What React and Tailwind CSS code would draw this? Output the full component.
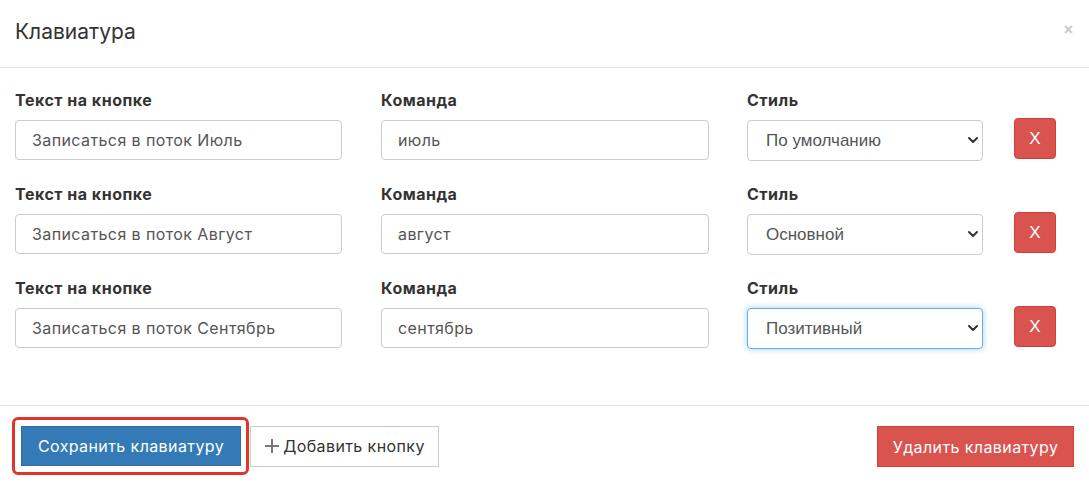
import React from "react";

const rows = [
  { text: "Записаться в поток Июль", command: "июль", style: "По умолчанию" },
  { text: "Записаться в поток Август", command: "август", style: "Основной" },
  { text: "Записаться в поток Сентябрь", command: "сентябрь", style: "Позитивный", focused: true },
];

const styles = ["По умолчанию", "Основной", "Позитивный", "Отрицательный"];

function Chevron() {
  return (
    <svg className="w-[12px] h-[12px] text-[#333]" viewBox="0 0 12 12" fill="none">
      <path d="M2 4l4 4 4-4" stroke="currentColor" strokeWidth="2" strokeLinecap="round" strokeLinejoin="round" />
    </svg>
  );
}

function ButtonRow({ row }) {
  return (
    <div className="flex items-start">
      <div className="w-[327px]">
        <div className="h-[22px] mb-[9px] text-[16px] leading-[22px] font-bold text-[#333] tracking-[0.5px]">Текст на кнопке</div>
        <input
          defaultValue={row.text}
          className="w-full h-[40px] px-[16px] rounded-[4px] border border-[#ccc] text-[16px] text-[#555] tracking-[0.4px] outline-none"
          style={{ fontFamily: "Inter, sans-serif" }}
        />
      </div>
      <div className="w-[328px] ml-[39px]">
        <div className="h-[22px] mb-[9px] text-[16px] leading-[22px] font-bold text-[#333] tracking-[0.5px]">Команда</div>
        <input
          defaultValue={row.command}
          className="w-full h-[40px] px-[16px] rounded-[4px] border border-[#ccc] text-[16px] text-[#555] tracking-[0.4px] outline-none"
          style={{ fontFamily: "Inter, sans-serif" }}
        />
      </div>
      <div className="w-[236px] ml-[38px]">
        <div className="h-[22px] mb-[9px] text-[16px] leading-[22px] font-bold text-[#333] tracking-[0.5px]">Стиль</div>
        <div className="relative">
          <select
            defaultValue={row.style}
            className={
              row.focused
                ? "w-full h-[41px] pl-[18px] pr-8 rounded-[4px] border border-[#66afe9] shadow-[0_0_6px_rgba(102,175,233,0.6)] appearance-none bg-white text-[17px] text-[#555] outline-none"
                : "w-full h-[41px] pl-[18px] pr-8 rounded-[4px] border border-[#ccc] appearance-none bg-white text-[17px] text-[#555] outline-none"
            }
            style={{ fontFamily: "'Liberation Sans', Arial, sans-serif" }}
          >
            {styles.map((s) => (
              <option key={s}>{s}</option>
            ))}
          </select>
          <div className="absolute right-[4px] top-[14px] pointer-events-none">
            <Chevron />
          </div>
        </div>
      </div>
      <button
        className="ml-[31px] mt-[29px] w-[42px] h-[41px] rounded-[4px] bg-[#d9534f] border border-[#d43f3a] text-white text-[17px]"
        style={{ fontFamily: "'Liberation Sans', Arial, sans-serif" }}
      >
        X
      </button>
    </div>
  );
}

export default function App() {
  return (
    <div className="w-[1089px] h-[482px] bg-white text-[#333]" style={{ fontFamily: "Inter, sans-serif" }}>
      {/* Header */}
      <div className="h-[68px] flex items-center justify-between pl-[15px] pr-[16px] pb-[4px] border-b border-[#e5e5e5]">
        <h4 className="text-[21px] text-[#333] font-normal">Клавиатура</h4>
        <span className="text-[#c8c8c8] text-[16px] font-bold -mt-[4px]" style={{ fontFamily: "'Liberation Sans', Arial, sans-serif" }}>
          ×
        </span>
      </div>

      {/* Body */}
      <div className="pl-[15px] pt-[21px] pb-[56px] flex flex-col gap-[22px]">
        {rows.map((row, i) => (
          <ButtonRow key={i} row={row} />
        ))}
      </div>

      {/* Footer */}
      <div className="border-t border-[#e5e5e5] pl-[12px] pr-[15px] pt-[11px] flex items-start justify-between">
        <div className="flex items-center">
          <div className="border-[3px] border-[#e0352b] rounded-[6px] p-[6px] pr-[5px]">
            <button className="w-[220px] h-[40px] bg-[#337ab7] border border-[#2e6da4] text-white text-[16px] tracking-[0.4px]">
              Сохранить клавиатуру
            </button>
          </div>
          <button className="ml-[1px] h-[41px] w-[189px] border border-[#ccc] bg-white text-[16px] text-[#333] tracking-[0.4px] flex items-center justify-center gap-[3px]">
            <svg className="w-[16px] h-[16px] text-[#777]" viewBox="0 0 16 16" fill="none">
              <path d="M8 1v14M1 8h14" stroke="currentColor" strokeWidth="2" />
            </svg>
            Добавить кнопку
          </button>
        </div>
        <button className="mt-[9px] w-[197px] h-[41px] bg-[#d9534f] border border-[#d43f3a] text-white text-[16px] tracking-[0.4px]">
          Удалить клавиатуру
        </button>
      </div>
    </div>
  );
}
